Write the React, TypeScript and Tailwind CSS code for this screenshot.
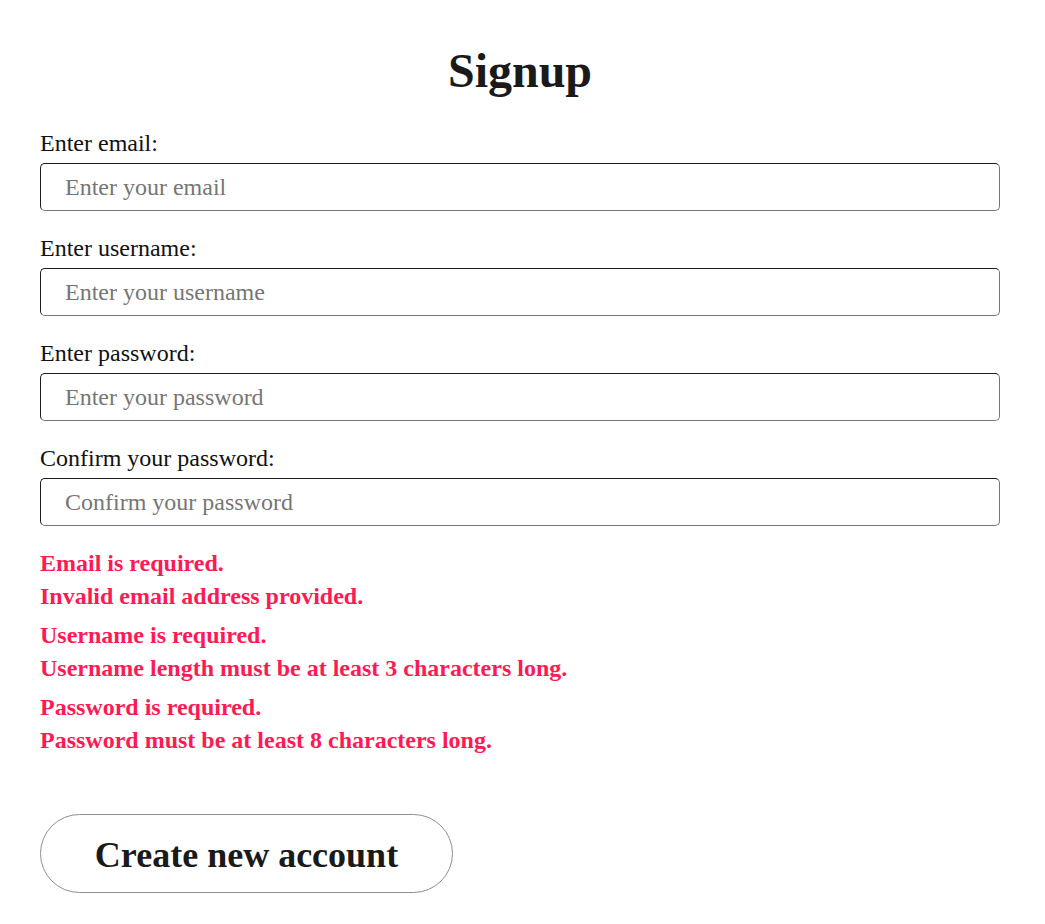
import React, { useState } from 'react';

type Field = {
  name: 'email' | 'username' | 'password' | 'confirm';
  label: string;
  placeholder: string;
  type: string;
};

const FIELDS: Field[] = [
  { name: 'email', label: 'Enter email:', placeholder: 'Enter your email', type: 'email' },
  { name: 'username', label: 'Enter username:', placeholder: 'Enter your username', type: 'text' },
  { name: 'password', label: 'Enter password:', placeholder: 'Enter your password', type: 'password' },
  { name: 'confirm', label: 'Confirm your password:', placeholder: 'Confirm your password', type: 'password' }
];

const ERRORS: string[][] = [
  ['Email is required.', 'Invalid email address provided.'],
  ['Username is required.', 'Username length must be at least 3 characters long.'],
  ['Password is required.', 'Password must be at least 8 characters long.']
];

function App() {
  const [values, setValues] = useState({ email: '', username: '', password: '', confirm: '' });

  const handleChange = (field: string, value: string) => {
    setValues(prev => ({ ...prev, [field]: value }));
  };

  return (
    <div className="min-h-screen bg-white font-['Liberation_Serif','Times_New_Roman',serif]">
      <form
        onSubmit={(e) => e.preventDefault()}
        className="ml-10 w-[960px] pt-[43px] pb-[31px]"
      >
        <h1 className="text-center text-[48px] font-bold leading-[55px] text-[#1a1a1a]">Signup</h1>

        <div className="mt-[31px] flex flex-col gap-[23px]">
          {FIELDS.map((f) => (
            <div key={f.name} className="flex flex-col gap-[6px]">
              <label htmlFor={f.name} className="text-[24px] leading-[28px] text-[#111111]">
                {f.label}
              </label>
              <input
                id={f.name}
                type={f.type}
                value={values[f.name]}
                onChange={(e) => handleChange(f.name, e.target.value)}
                placeholder={f.placeholder}
                className="h-[48px] w-full rounded-[5px] border border-t-[#1c1c1c] border-l-[#1c1c1c] border-r-[#767676] border-b-[#767676] bg-white pl-[24px] text-[24px] text-[#111111] outline-none placeholder:text-[#767676]"
              />
            </div>
          ))}
        </div>

        {/* Validation errors */}
        <div className="mt-[21px] flex flex-col gap-[6px]">
          {ERRORS.map((group, i) => (
            <div key={i}>
              {group.map((msg) => (
                <p key={msg} className="text-[24px] font-bold leading-[33px] text-[#ff1a55]">
                  {msg}
                </p>
              ))}
            </div>
          ))}
        </div>

        <button
          type="submit"
          className="mt-[57px] flex h-[79px] w-[413px] items-center justify-center rounded-full border border-[#8f8f8f] bg-white pt-[3px] text-[36px] font-bold leading-[41px] text-[#1a1a1a]"
        >
          Create new account
        </button>
      </form>
    </div>
  );
}

export default App;
